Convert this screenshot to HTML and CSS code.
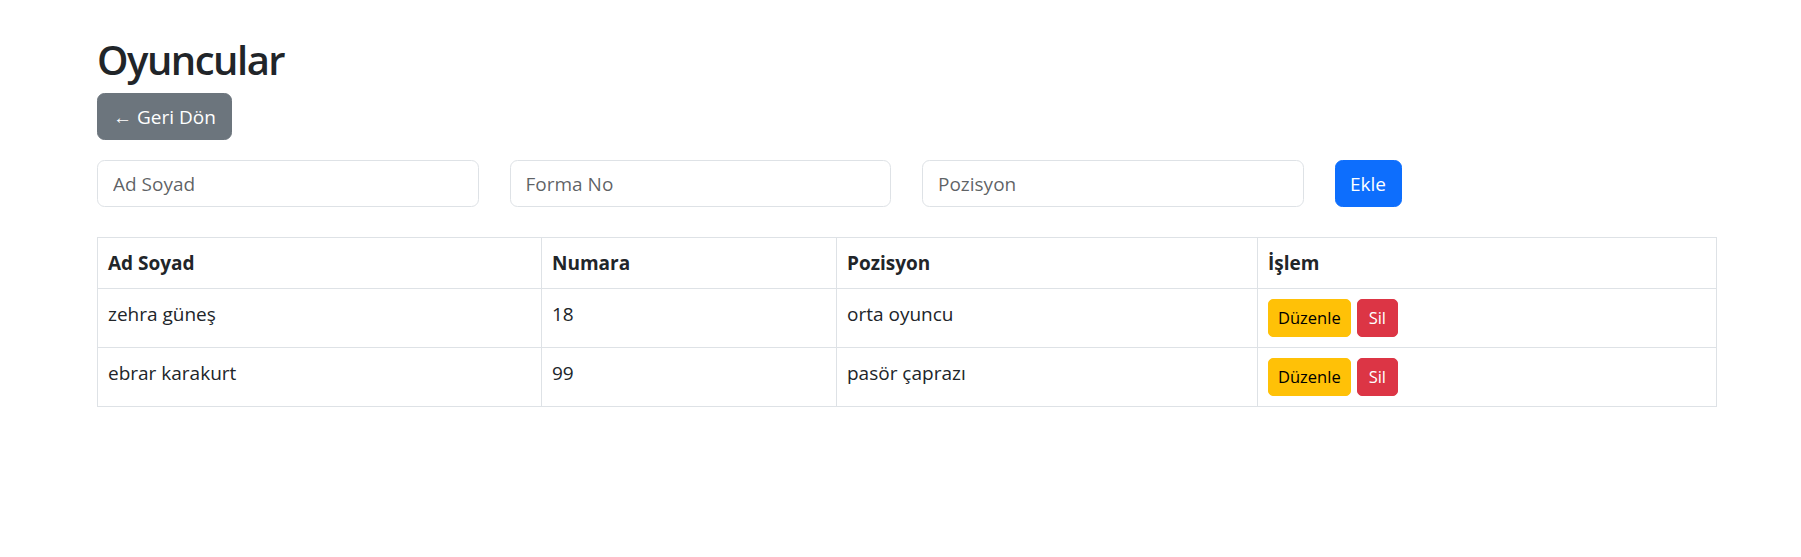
FILE: index.html
```html
<!DOCTYPE html>
<html lang="tr">
<head>
<meta charset="utf-8">
<title>Oyuncular</title>
<link rel="stylesheet" href="styles.css">
</head>
<body>
<div class="container">
  <h1 class="title">Oyuncular</h1>
  <a class="btn btn-secondary" href="#">← Geri Dön</a>
  <form class="form-row">
    <input class="form-control" type="text" placeholder="Ad Soyad">
    <input class="form-control" type="text" placeholder="Forma No">
    <input class="form-control" type="text" placeholder="Pozisyon">
    <div class="form-action"><button class="btn btn-primary" type="button">Ekle</button></div>
  </form>
  <table class="table">
    <colgroup>
      <col class="c1"><col class="c2"><col class="c3"><col class="c4">
    </colgroup>
    <thead>
      <tr><th>Ad Soyad</th><th>Numara</th><th>Pozisyon</th><th>İşlem</th></tr>
    </thead>
    <tbody>
      <tr>
        <td>zehra güneş</td><td>18</td><td>orta oyuncu</td>
        <td><div class="actions"><button class="btn-sm btn-warning" type="button">Düzenle</button><button class="btn-sm btn-danger" type="button">Sil</button></div></td>
      </tr>
      <tr>
        <td>ebrar karakurt</td><td>99</td><td>pasör çaprazı</td>
        <td><div class="actions"><button class="btn-sm btn-warning" type="button">Düzenle</button><button class="btn-sm btn-danger" type="button">Sil</button></div></td>
      </tr>
    </tbody>
  </table>
</div>
</body>
</html>
```
FILE: styles.css
```css
* { box-sizing: border-box; }
html, body { margin: 0; padding: 0; background: #fff; }
body {
  font-family: "Open Sans", "Noto Sans", "Liberation Sans", sans-serif;
  font-size: 19px;
  line-height: 30px;
  color: #212529;
}
.container {
  width: 1619px;
  margin-left: 97px;
  padding-top: 34px;
}
.title {
  margin: 0 0 7px 0;
  font-size: 40px;
  line-height: 52px;
  font-weight: 600;
  letter-spacing: -1.5px;
  color: #212529;
}
.btn {
  display: inline-block;
  font-family: inherit;
  font-size: 19px;
  line-height: 30px;
  padding: 7.5px 15px;
  border: 1px solid transparent;
  border-radius: 7.5px;
  text-decoration: none;
  color: #fff;
  cursor: pointer;
}
.btn-secondary { background: #6c757d; border-color: #6c757d; }
.btn-primary { background: #0d6efd; border-color: #0d6efd; padding-left: 14.5px; padding-right: 14.5px; }
.form-row {
  display: grid;
  grid-template-columns: repeat(4, 1fr);
  column-gap: 31px;
  margin: 20px 0 30px 0;
}
.form-control {
  display: block;
  width: 100%;
  height: 47px;
  padding: 7.5px 15px;
  font-family: inherit;
  font-size: 19px;
  line-height: 30px;
  color: #212529;
  background: #fff;
  border: 1px solid #dee2e6;
  border-radius: 7.5px;
  outline: none;
}
.form-control::placeholder { color: rgba(33, 37, 41, 0.72); }
.form-action { display: flex; }
.table {
  width: 1619px;
  border-collapse: collapse;
  table-layout: fixed;
}
.c1 { width: 444px; }
.c2 { width: 295px; }
.c3 { width: 421px; }
.c4 { width: 459px; }
.table th, .table td {
  border: 1px solid #dee2e6;
  padding: 10px 10px;
  text-align: left;
  vertical-align: top;
}
.table th { font-weight: 700; }
.actions { display: flex; gap: 6px; }
.btn-sm {
  font-family: inherit;
  font-size: 16.5px;
  line-height: 26px;
  padding: 5px 9px;
  border: 1px solid transparent;
  border-radius: 5px;
  cursor: pointer;
}
.btn-warning { background: #ffc107; border-color: #ffc107; color: #000; }
.btn-danger { background: #dc3545; border-color: #dc3545; color: #fff; padding-left: 11px; padding-right: 11px; }
```
